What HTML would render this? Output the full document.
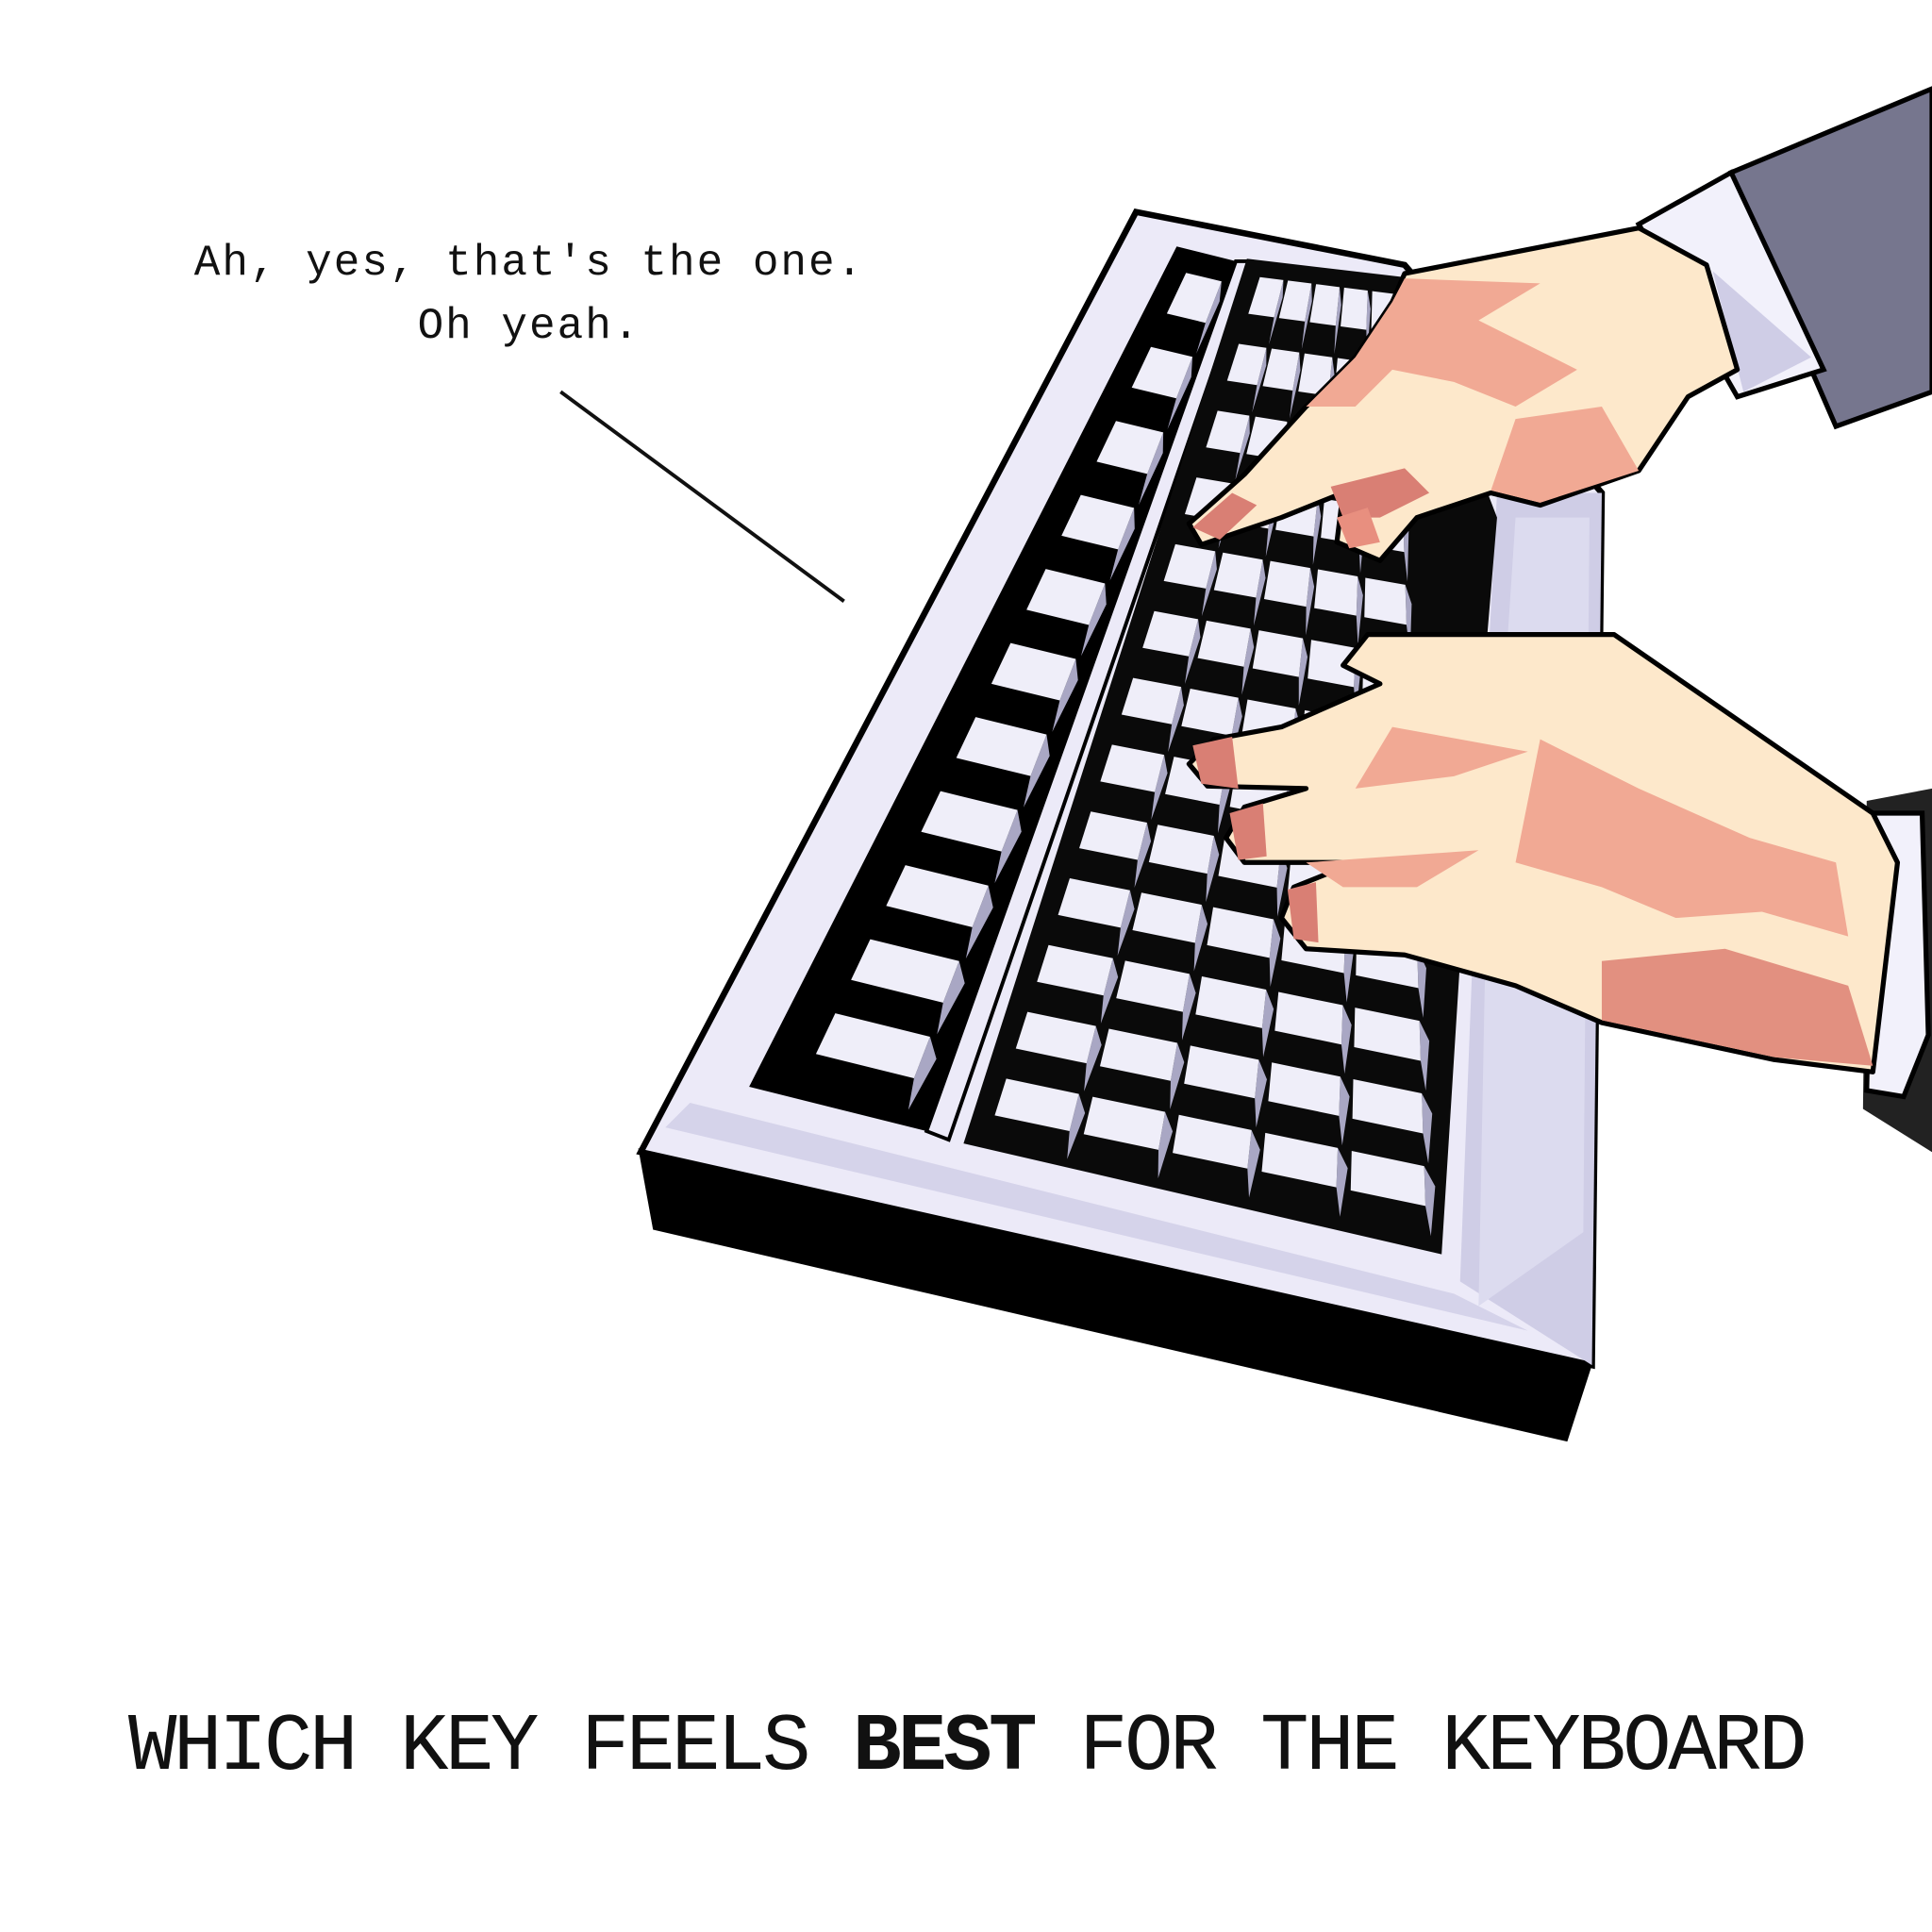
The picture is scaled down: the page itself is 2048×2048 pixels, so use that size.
<!DOCTYPE html>
<html><head><meta charset="utf-8"><style>
html,body{margin:0;padding:0;background:#fff;}
body{width:2048px;height:2048px;position:relative;overflow:hidden;}
svg{position:absolute;left:0;top:0;}
.t1{position:absolute;left:0;width:1122px;text-align:center;font-family:"Liberation Mono",monospace;font-size:46px;letter-spacing:2px;color:#111;white-space:pre;}
.bt{position:absolute;left:0;width:2048px;top:1803px;text-align:center;font-family:"Liberation Mono",monospace;font-size:86px;letter-spacing:-3.6px;color:#111;white-space:pre;}
</style></head><body>
<svg id="s" width="2048" height="2048" viewBox="0 0 1568 1568" xmlns="http://www.w3.org/2000/svg">
<line x1="455" y1="318" x2="685" y2="488" stroke="#111" stroke-width="3"/>
<polygon points="518,932 530,998 1272,1170 1292,1108" fill="#000"/>
<polygon points="922,172 1140,215 1300,400 1292,1108 520,935" fill="#eceaf8" stroke="#000" stroke-width="5"/>
<polygon points="1215,400 1300,400 1292,1108 1185,1040 1195,780" fill="#cfcde6"/>
<polygon points="1230,420 1290,420 1285,1000 1200,1060 1205,800" fill="#dcdbef"/>
<polygon points="540,915 1240,1080 1180,1050 560,895" fill="#d5d3ea"/>
<polygon points="955,200 1003,212 752,918 608,882" fill="#000"/>
<polygon points="1003,212 1015,212 770,925 752,918" fill="#eceaf8" stroke="#000" stroke-width="3"/>
<polygon points="1012,210 1140,225 1215,420 1185,780 1170,1018 782,928" fill="#0a0a0a"/>
<g id="keys"></g>
<polygon points="1405,140 1568,72 1568,318 1490,346 1470,300" fill="#76768e" stroke="#000" stroke-width="4"/>
<polygon points="1330,182 1405,140 1480,300 1410,322" fill="#f2f1fb" stroke="#000" stroke-width="4"/>
<polygon points="1390,220 1470,290 1415,318" fill="#cfcde6"/>
<polygon points="1140,222 1330,185 1385,215 1410,300 1370,322 1330,382 1250,410 1210,400 1150,420 1120,455 1085,440 1090,400 1040,420 975,442 965,425 1010,385 1060,330 1100,290 1130,245" fill="#fde8cb" stroke="#000" stroke-width="4" stroke-linejoin="round"/>
<polygon points="1140,226 1250,230 1200,260 1280,300 1230,330 1180,310 1130,300 1100,330 1060,330 1100,290 1130,245" fill="#f1a994"/>
<polygon points="1230,340 1300,330 1330,382 1250,408 1210,398" fill="#f1a994"/>
<polygon points="1080,395 1140,380 1160,400 1120,420 1090,420" fill="#d97f74"/>
<polygon points="968,428 1000,400 1020,410 990,438" fill="#d97f74"/>
<polygon points="1085,420 1110,412 1120,440 1095,445" fill="#e88f7f"/>
<polygon points="1515,650 1568,640 1568,935 1512,900" fill="#222"/>
<polygon points="1520,660 1560,660 1565,840 1545,890 1515,885" fill="#f2f1fb" stroke="#000" stroke-width="4"/>
<polygon points="1110,515 1310,515 1520,660 1540,700 1520,870 1440,860 1300,830 1230,800 1140,775 1060,770 1040,745 1050,720 1100,700 1010,700 995,680 1010,655 1060,640 980,638 965,620 985,600 1040,590 1120,555 1090,540" fill="#fde8cb" stroke="#000" stroke-width="4" stroke-linejoin="round"/>
<polygon points="1250,600 1330,640 1420,680 1490,700 1500,760 1430,740 1360,745 1300,720 1230,700" fill="#f1a994"/>
<polygon points="1300,780 1400,770 1500,800 1520,865 1440,858 1300,828" fill="#e29080"/>
<polygon points="1130,590 1240,610 1180,630 1100,640" fill="#f1a994"/>
<polygon points="1060,700 1200,690 1150,720 1090,720" fill="#f1a994"/>
<polygon points="968,605 1000,598 1005,640 975,636" fill="#d97f74"/>
<polygon points="998,660 1025,652 1028,695 1005,698" fill="#d97f74"/>
<polygon points="1045,722 1068,716 1070,765 1050,762" fill="#d97f74"/>
</svg>
<div class="t1" style="top:253px">Ah, yes, that's the one.</div>
<div class="t1" style="top:320px">Oh yeah.</div>
<div class="bt">WHICH KEY FEELS <b>BEST</b> FOR THE KEYBOARD</div>
<script>
(function(){
var g=document.getElementById('keys'),out='';
function bl(c,u,v){var a=c[0],b=c[1],d=c[2],e=c[3];
var x=(1-v)*((1-u)*a[0]+u*b[0])+v*((1-u)*d[0]+u*e[0]);
var y=(1-v)*((1-u)*a[1]+u*b[1])+v*((1-u)*d[1]+u*e[1]);return [x,y];}
function grid(c,rows,cols){
for(var i=0;i<rows;i++)for(var j=0;j<cols;j++){
var u0=j/cols+0.06/cols,u1=(j+1)/cols-0.1/cols,v0=i/rows+0.05/rows,v1=(i+1)/rows-0.4/rows;
var p=[bl(c,u0,v0),bl(c,u1,v0),bl(c,u1,v1),bl(c,u0,v1)];
var q=[bl(c,u1,v0),bl(c,u1+0.12/cols,v0+0.25/rows),bl(c,u1+0.05/cols,(i+1)/rows),bl(c,u1,v1)];
var f=function(a){return a.map(function(z){return z[0].toFixed(1)+','+z[1].toFixed(1)}).join(' ');};
out+='<polygon points="'+f(q)+'" fill="#a9a7c4"/>';
out+='<polygon points="'+f(p)+'" fill="#efeef9"/>';
}}
grid([[1022,222],[1135,236],[796,926],[1165,1004]],13,5);
grid([[962,218],[996,226],[645,878],[742,902]],11,1);
g.innerHTML=out;
})();
</script>
</body></html>
